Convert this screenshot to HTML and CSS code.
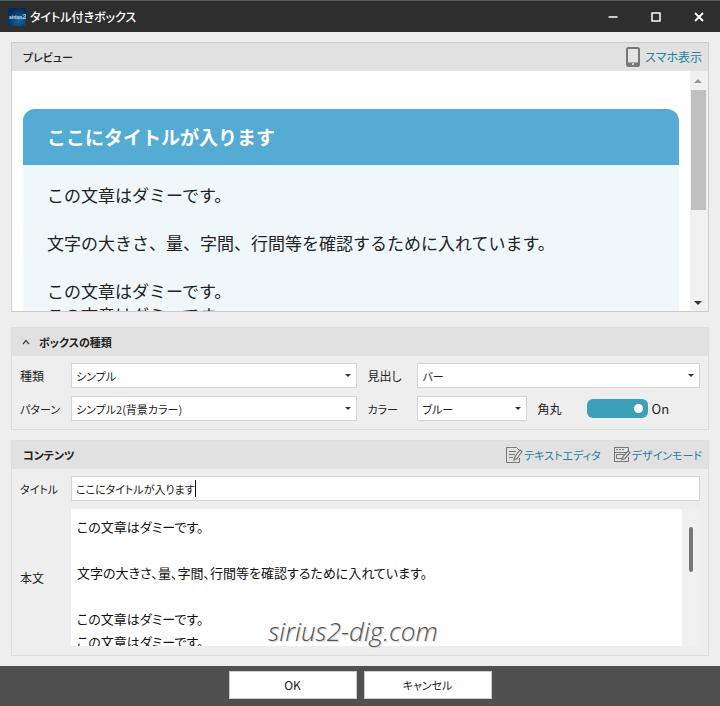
FILE: index.html
```
<!DOCTYPE html>
<html lang="ja">
<head>
  <meta charset="UTF-8">
  <meta name="viewport" content="width=device-width, initial-scale=1.0">
  <title>タイトル付きボックス</title>
  <link rel="stylesheet" href="styles.css">
</head>
<body>
  <header class="titlebar">
    <svg class="app-icon" viewBox="0 0 18 18" width="18" height="18" aria-hidden="true">
      <defs>
        <radialGradient id="sky" cx="0.6" cy="0.7" r="0.7">
          <stop offset="0" stop-color="#1668a4"/>
          <stop offset="1" stop-color="#042a52"/>
        </radialGradient>
      </defs>
      <rect width="18" height="18" fill="url(#sky)"/>
      <text x="1" y="11" font-size="5" font-weight="bold" fill="#d5e8f5">sirius<tspan font-size="8" fill="#a9d4ee">2</tspan></text>
    </svg>
    <h1>タイトル付きボックス</h1>
    <div class="window-buttons">
      <button type="button" aria-label="最小化"><svg viewBox="0 0 10 10" width="10" height="10"><path d="M0.5 5H9.500" stroke="#fff" stroke-width="1.500"/></svg></button>
      <button type="button" aria-label="最大化"><svg viewBox="0 0 10 10" width="10" height="10"><rect x="1" y="1" width="8" height="8" fill="none" stroke="#fff" stroke-width="1.500"/></svg></button>
      <button type="button" aria-label="閉じる"><svg viewBox="0 0 10 10" width="10" height="10"><path d="M1 1L9 9M9 1L1 9" stroke="#fff" stroke-width="1.800"/></svg></button>
    </div>
  </header>

  <main>
    <section class="panel preview-panel">
      <div class="panel-head">
        <h2 class="plain">プレビュー</h2>
        <nav>
          <a href="#" class="sp-link">
            <svg viewBox="0 0 14 20" width="14" height="20" aria-hidden="true">
              <rect x="1" y="1" width="12" height="18" rx="1.500" fill="#e4e4e4" stroke="#777" stroke-width="2"/>
              <path d="M1 15.500H13V18H1Z" fill="#777"/>
              <circle cx="7" cy="17" r="1" fill="#eee"/>
            </svg>
            スマホ表示
          </a>
        </nav>
      </div>
      <div class="preview">
        <div class="preview-page">
          <div class="title-box">
            <div class="title-box-head">ここにタイトルが入ります</div>
            <div class="title-box-body">
              この文章はダミーです。<br><br>
              文字の大きさ、量、字間、行間等を確認するために入れています。<br><br>
              この文章はダミーです。<br>
              この文章はダミーです。
            </div>
          </div>
        </div>
        <div class="scrollbar">
          <span class="arrow up"></span>
          <span class="thumb"></span>
          <span class="arrow down"></span>
        </div>
      </div>
    </section>

    <section class="panel type-panel">
      <div class="panel-head foldable">
        <svg viewBox="0 0 8 6" width="8" height="6" aria-hidden="true"><path d="M1 5L4 1.500L7 5" fill="none" stroke="#444" stroke-width="1.300"/></svg>
        <h2>ボックスの種類</h2>
      </div>
      <div class="options">
        <label for="kind">種類</label>
        <span class="select"><select id="kind"><option>シンプル</option></select></span>
        <label for="heading" class="second">見出し</label>
        <span class="select"><select id="heading"><option>バー</option></select></span>

        <label for="pattern" class="kana">パターン</label>
        <span class="select"><select id="pattern"><option>シンプル2(背景カラー)</option></select></span>
        <label for="color" class="second kana">カラー</label>
        <div class="color-row">
          <span class="select short"><select id="color"><option>ブルー</option></select></span>
          <label for="round">角丸</label>
          <input type="checkbox" id="round" class="toggle" checked>
          <span class="state">On</span>
        </div>
      </div>
    </section>

    <section class="panel content-panel">
      <div class="panel-head">
        <h2>コンテンツ</h2>
        <nav>
          <a href="#">
            <svg viewBox="0 0 18 18" width="18" height="18" aria-hidden="true" fill="none" stroke="#777">
              <path d="M14.500 12V16.500H1.500V1.500H11.500L14.500 4.500"/>
              <path d="M4 5.500H11M4 8.500H10M4 11.500H8"/>
              <path d="M9 14L10 10.500L15 4L17 5.500L12 12.500Z" fill="#e4e4e4" stroke-width="1.200"/>
            </svg>
            テキストエディタ
          </a>
          <a href="#">
            <svg viewBox="0 0 18 18" width="18" height="18" aria-hidden="true" fill="none" stroke="#777">
              <path d="M15.500 5V1.500H1.500V15.500H15.500V11"/>
              <path d="M3 3.500H12" stroke-dasharray="2 1"/>
              <path d="M1.500 6.500H14M11 8.500H3.500V12.500H9"/>
              <path d="M9 13.500L10 10.500L15 5L17 6.500L12 12.500Z" fill="#e4e4e4" stroke-width="1.200"/>
            </svg>
            デザインモード
          </a>
        </nav>
      </div>
      <div class="fields">
        <label for="title" class="kana">タイトル</label>
        <div class="title-field">
          <input type="text" id="title" value="ここにタイトルが入ります">
          <span class="caret"></span>
        </div>
        <label for="text">本文</label>
        <div class="text-field">
          <textarea id="text">この文章はダミーです。

文字の大きさ、量、字間、行間等を確認するために入れています。

この文章はダミーです。
この文章はダミーです。</textarea>
          <div class="slim-scrollbar"><span></span></div>
        </div>
      </div>
      <div class="watermark">sirius2-dig.com</div>
    </section>
  </main>

  <footer>
    <button type="button">OK</button>
    <button type="button" class="kana">キャンセル</button>
  </footer>
</body>
</html>
```
FILE: styles.css
```
* {
  box-sizing: border-box;
  margin: 0;
  padding: 0;
}
body {
  min-height: 100vh;
  display: flex;
  flex-direction: column;
  background: #eee;
  color: #222;
  font-family: "Noto Sans CJK JP", sans-serif;
  font-size: 12px;
  line-height: 16px;
  font-feature-settings: "palt";
}
button, input, select, textarea {
  font: inherit;
  font-feature-settings: inherit;
  color: inherit;
}
.kana {
  font-size: 11px;
}

/* title bar */
.titlebar {
  display: flex;
  align-items: center;
  height: 32px;
  padding-left: 8px;
  background: #2e2e2e;
  border-top: 1px solid #5c605c;
  color: #fff;
}
.app-icon {
  font-family: "Liberation Sans", sans-serif;
}
h1 {
  flex: 1;
  margin-left: 4px;
  font-size: 12px;
  font-weight: 500;
}
.window-buttons {
  display: flex;
}
.window-buttons button {
  display: flex;
  align-items: center;
  justify-content: center;
  width: 43px;
  height: 31px;
  border: none;
  background: none;
}

main {
  flex: 1;
  display: flex;
  flex-direction: column;
  padding: 10px 11px;
}
.panel {
  border: 1px solid #ddd;
}
.panel-head {
  display: flex;
  align-items: center;
  height: 28px;
  padding: 0 6px 0 11px;
  background: #e1e1e1;
}
h2 {
  font-size: 11px;
  font-weight: 700;
}
h2.plain {
  font-weight: 500;
}
.panel-head nav {
  display: flex;
  gap: 12px;
  margin-left: auto;
}
.panel-head a {
  display: flex;
  align-items: center;
  gap: 1px;
  color: #25829a;
  font-size: 11px;
  text-decoration: none;
}
.panel-head a.sp-link {
  gap: 5px;
  font-size: 12px;
}

/* preview */
.preview-panel {
  margin-bottom: 15px;
  border-color: #ccc;
}
.preview {
  display: flex;
  height: 240px;
  background: #fff;
}
.preview-page {
  flex: 1;
  padding: 38px 11px 0;
  overflow: hidden;
}
.title-box {
  border-radius: 12px 12px 0 0;
  background: #eff7fb;
  overflow: hidden;
  font-feature-settings: normal;
}
.title-box-head {
  padding: 16px 24px;
  background: #54abd4;
  color: #fff;
  font-size: 19px;
  font-weight: 700;
  line-height: 24px;
}
.title-box-body {
  padding: 18px 24px;
  font-size: 17px;
  line-height: 24px;
}
.scrollbar {
  display: flex;
  flex-direction: column;
  align-items: center;
  width: 18px;
  padding: 8px 2px 6px 0;
  background: #f0f0f0;
}
.arrow {
  border: 4px solid transparent;
}
.arrow.up {
  border-top: none;
  border-bottom-color: #999;
}
.arrow.down {
  margin-top: auto;
  border-bottom: none;
  border-top-color: #333;
}
.thumb {
  width: 15px;
  height: 120px;
  margin-top: 7px;
  background: #c0c0c0;
}

/* box type */
.type-panel {
  margin-bottom: 10px;
}
.foldable {
  padding-left: 10px;
  gap: 9px;
}
.options {
  display: grid;
  grid-template-columns: 51px 287fr 60px 283fr;
  gap: 8px 0;
  align-items: center;
  padding: 7px 8px 8px;
}
.options .second {
  padding-left: 10px;
}
.select {
  position: relative;
  display: block;
}
.select::after {
  content: "";
  position: absolute;
  top: 11px;
  right: 6px;
  border: 3px solid transparent;
  border-top-color: #333;
  border-bottom: none;
  pointer-events: none;
}
select {
  display: block;
  appearance: none;
  width: 100%;
  height: 25px;
  padding: 0 4px;
  border: 1px solid #d5d5d5;
  border-radius: 0;
  background: #fff;
  font-size: 11px;
}
.color-row {
  display: flex;
  align-items: center;
}
.short {
  width: 110px;
}
.color-row label {
  width: 60px;
  padding-left: 10px;
}
.toggle {
  appearance: none;
  display: flex;
  align-items: center;
  justify-content: flex-end;
  width: 61px;
  height: 19px;
  padding-right: 5px;
  border-radius: 6px;
  background: #3ba0b8;
}
.toggle::after {
  content: "";
  width: 9px;
  height: 9px;
  border-radius: 50%;
  background: #fff;
}
.toggle:not(:checked) {
  justify-content: flex-start;
  padding-left: 5px;
  background: #aaa;
}
.state {
  margin-left: 3px;
  font-size: 13px;
}

/* contents */
.content-panel {
  position: relative;
  flex: 1;
}
.fields {
  display: grid;
  grid-template-columns: 51px 1fr;
  gap: 8px 0;
  align-items: center;
  padding: 7px 8px 8px;
}
.title-field {
  position: relative;
}
.title-field input {
  display: block;
  width: 100%;
  height: 25px;
  padding: 0 4px;
  border: 1px solid #d5d5d5;
  font-size: 11px;
}
.caret {
  position: absolute;
  top: 4px;
  left: 124px;
  width: 1px;
  height: 17px;
  background: #111;
}
.text-field {
  display: flex;
}
textarea {
  flex: 1;
  height: 137px;
  padding: 6px 6px 0;
  border: none;
  background: #fff;
  color: #111;
  font-size: 13px;
  line-height: 23px;
  resize: none;
  overflow: hidden;
}
.slim-scrollbar {
  width: 18px;
  padding: 18px 7px;
  background: #f0f0f0;
}
.slim-scrollbar span {
  display: block;
  width: 4px;
  height: 45px;
  border-radius: 2px;
  background: #777;
}
.watermark {
  position: absolute;
  left: 0;
  right: 14px;
  bottom: 8px;
  color: #555;
  font-family: "Open Sans", sans-serif;
  font-size: 26px;
  font-style: italic;
  font-weight: 300;
  line-height: 32px;
  text-align: center;
  text-shadow: 1px 1px 1px #ccc;
  pointer-events: none;
}

footer {
  display: flex;
  justify-content: center;
  gap: 7px;
  padding: 5px 0 7px;
  background: #505050;
}
footer button {
  width: 128px;
  height: 28px;
  border: 1px solid #ccc;
  background: #fff;
}
```
